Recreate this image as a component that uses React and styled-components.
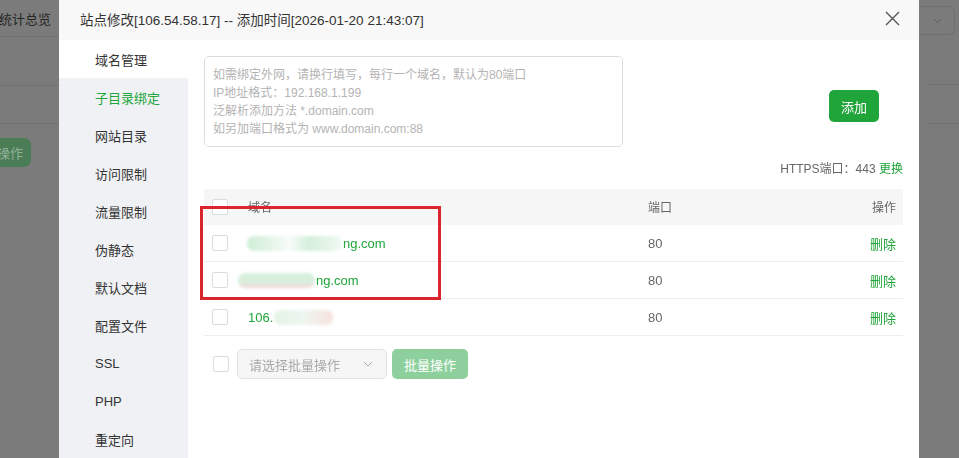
import React from 'react'
import styled, { createGlobalStyle } from 'styled-components'

const Global = createGlobalStyle`
  html, body { margin: 0; padding: 0; }
  body {
    font-family: "Liberation Sans", "Noto Sans CJK SC", sans-serif;
    color: #333;
  }
  * { box-sizing: border-box; }
`

const GREEN = '#20a53a'

const Screen = styled.div`
  position: relative;
  width: 959px;
  height: 458px;
  overflow: hidden;
  background: #7b7b7b;
  display: flex;
  justify-content: space-between;
`

/* page behind the dialog (seen through the mask) */
const BgLeft = styled.div`
  width: 59px;
  overflow: hidden;
  display: flex;
  flex-direction: column;
  align-items: flex-end;
`

const BgRow = styled.div`
  width: 100%;
  height: ${p => p.h}px;
  border-bottom: 1px solid #717171;
  display: flex;
  align-items: center;
  justify-content: flex-end;
  padding-right: 8px;
  font-size: 13px;
  color: #262626;
  white-space: nowrap;
`

const BgButton = styled.div`
  margin-top: 14px;
  margin-right: 28px;
  height: 29px;
  padding: 0 8px 0 20px;
  border-radius: 0 7px 7px 0;
  background: #4a7d56;
  color: #93b19a;
  font-size: 13px;
  display: flex;
  align-items: center;
  white-space: nowrap;
`

const BgRight = styled.div`
  width: 40px;
  display: flex;
  flex-direction: column;
  align-items: flex-end;
`

const BgSelect = styled.div`
  margin-top: 6px;
  margin-right: 4px;
  width: 35px;
  height: 29px;
  border: 1px solid #6f6f6f;
  border-left: none;
  border-radius: 0 6px 6px 0;
  display: flex;
  align-items: center;
  justify-content: center;
`

const BgLine = styled.div`
  width: 31px;
  margin-top: ${p => p.mt}px;
  border-bottom: 1px solid #717171;
`

/* dialog */
const Modal = styled.div`
  position: absolute;
  left: 59px;
  top: 0;
  width: 860px;
  height: 480px;
  background: #fff;
  display: flex;
  flex-direction: column;
`

const Header = styled.div`
  height: 40px;
  flex: none;
  background: #f8f8f8;
  display: flex;
  align-items: center;
  justify-content: space-between;
  padding: 0 18px 0 21px;
`

const Title = styled.div`
  font-size: 13.5px;
  color: #333;
  padding-bottom: 3px;
`

const CloseBtn = styled.div`
  width: 18px;
  height: 18px;
  display: flex;
  align-items: center;
  justify-content: center;
  margin-bottom: 3px;
`

const Body = styled.div`
  flex: 1;
  display: flex;
`

const Side = styled.div`
  width: 129px;
  background: #f0f1f4;
  display: flex;
  flex-direction: column;
`

const SideItem = styled.div`
  height: 38px;
  flex: none;
  display: flex;
  align-items: center;
  padding-left: 36px;
  font-size: 13px;
  color: ${p => (p.active ? GREEN : '#333')};
  background: ${p => (p.hover ? '#fff' : 'transparent')};
`

const Content = styled.div`
  flex: 1;
  padding: 16px 16px 0 16px;
  display: flex;
  flex-direction: column;
`

const AddRow = styled.div`
  display: flex;
  justify-content: space-between;
`

const DomainInput = styled.textarea`
  width: 419px;
  height: 91px;
  border: 1px solid #dcdcdc;
  border-radius: 5px;
  padding: 9px 8px;
  font-family: inherit;
  font-size: 12px;
  line-height: 18px;
  resize: none;
  outline: none;
  &::placeholder { color: #b4b4b4; }
`

const GreenButton = styled.button`
  height: ${p => p.h || 30}px;
  padding: 0 ${p => p.px || 12}px;
  border: none;
  border-radius: 5px;
  background: ${p => (p.disabled ? '#8ed09d' : GREEN)};
  color: #fff;
  font-family: inherit;
  font-size: 13px;
  cursor: pointer;
`

const AddWrap = styled.div`
  margin-top: 34px;
  margin-right: 24px;
`

const PortLine = styled.div`
  margin-top: 14px;
  text-align: right;
  font-size: 12px;
  color: #666;
  line-height: 16px;
`

const Link = styled.span`
  color: ${GREEN};
`

const Table = styled.div`
  margin-top: 12px;
  display: flex;
  flex-direction: column;
`

const Row = styled.div`
  display: grid;
  grid-template-columns: 36px 400px 160px 1fr;
  height: ${p => (p.head ? 36 : 37)}px;
  align-items: center;
  background: ${p => (p.head ? '#f6f6f6' : '#fff')};
  border-bottom: 1px solid ${p => (p.head ? '#f6f6f6' : '#ececec')};
  font-size: ${p => (p.head ? 12 : 13)}px;
  color: #666;
`

const Cell = styled.div`
  padding: 0 ${p => (p.right ? 7 : 8)}px;
  text-align: ${p => (p.right ? 'right' : 'left')};
  display: flex;
  align-items: center;
  justify-content: ${p => (p.right ? 'flex-end' : 'flex-start')};
  white-space: nowrap;
`

const Check = styled.span`
  width: 16px;
  height: 16px;
  border: 1px solid #dcdcdc;
  border-radius: 2px;
  background: #fff;
  display: inline-block;
`

const Domain = styled.span`
  color: ${GREEN};
  display: flex;
  align-items: center;
`

const Blur = styled.span`
  display: inline-block;
  width: ${p => p.w}px;
  height: 15px;
  margin-left: ${p => p.ml || 0}px;
  border-radius: 7px;
  background: ${p => p.bg};
  filter: blur(1.5px);
`

const DomainTail = styled.span`
  margin-left: 1px;
`

const DelLink = styled.span`
  color: ${GREEN};
`

const Footer = styled.div`
  margin-top: 13px;
  display: flex;
  align-items: center;
  gap: 5px;
  padding-left: 9px;
`

const BatchSelect = styled.div`
  margin-left: 3px;
  width: 150px;
  height: 30px;
  border: 1px solid #e4e4e4;
  border-radius: 5px;
  background: #f6f6f6;
  display: flex;
  align-items: center;
  justify-content: space-between;
  padding: 0 13px 0 11px;
  font-size: 13px;
  color: #aaa;
`

const Highlight = styled.div`
  position: absolute;
  left: 200px;
  top: 206px;
  width: 241px;
  height: 94px;
  border: 3px solid #d9262e;
  pointer-events: none;
`

const Chevron = ({ color = '#aaa', size = 10 }) => (
  <svg width={size} height={size * 0.6} viewBox="0 0 10 6">
    <path d="M1 1 L5 5 L9 1" fill="none" stroke={color} strokeWidth="1" />
  </svg>
)

const menu = ['域名管理', '子目录绑定', '网站目录', '访问限制', '流量限制', '伪静态', '默认文档', '配置文件', 'SSL', 'PHP', '重定向']

const greenBlur = 'linear-gradient(90deg, #cfeed7 0%, #e4f5e8 25%, #f8fcf9 45%, #d4efdb 65%, #f0f9f2 100%)'
const pinkBlur = 'linear-gradient(180deg, #d6efdc 0%, #d9efde 60%, #f6d6d9 100%)'
const ipBlur = 'linear-gradient(90deg, #e3f3e6 0%, #eef6ef 50%, #f7e1df 100%)'

const rows = [
  { pre: null, blur: { w: 95, ml: -1, bg: greenBlur }, post: 'ng.com' },
  { pre: null, blur: { w: 77, ml: -10, bg: pinkBlur }, post: 'ng.com' },
  { pre: '106.', blur: { w: 59, ml: 1, bg: ipBlur }, post: '' },
]

export default function App() {
  return (
    <>
      <Global />
      <Screen>
        <BgLeft>
          <BgRow h={37}>网站统计总览</BgRow>
          <BgRow h={49} />
          <BgRow h={38} />
          <BgButton>批量操作</BgButton>
        </BgLeft>
        <BgRight>
          <BgSelect>
            <Chevron color="#5a5a5a" size={9} />
          </BgSelect>
          <BgLine mt={49} />
          <BgLine mt={38} />
        </BgRight>

        <Modal>
          <Header>
            <Title>站点修改[106.54.58.17] -- 添加时间[2026-01-20 21:43:07]</Title>
            <CloseBtn>
              <svg width="15" height="15" viewBox="0 0 15 15">
                <path d="M1 1 L14 14 M14 1 L1 14" stroke="#555" strokeWidth="1.4" fill="none" />
              </svg>
            </CloseBtn>
          </Header>
          <Body>
            <Side>
              {menu.map((m, i) => (
                <SideItem key={m} hover={i === 0} active={i === 1}>{m}</SideItem>
              ))}
            </Side>
            <Content>
              <AddRow>
                <DomainInput
                  placeholder={'如需绑定外网，请换行填写，每行一个域名，默认为80端口\nIP地址格式：192.168.1.199\n泛解析添加方法 *.domain.com\n如另加端口格式为 www.domain.com:88'}
                />
                <AddWrap>
                  <GreenButton h={32} px={12}>添加</GreenButton>
                </AddWrap>
              </AddRow>
              <PortLine>HTTPS端口：443 <Link>更换</Link></PortLine>
              <Table>
                <Row head>
                  <Cell><Check /></Cell>
                  <Cell>域名</Cell>
                  <Cell>端口</Cell>
                  <Cell right>操作</Cell>
                </Row>
                {rows.map((r, i) => (
                  <Row key={i}>
                    <Cell><Check /></Cell>
                    <Cell>
                      <Domain>
                        {r.pre}
                        <Blur w={r.blur.w} ml={r.blur.ml} bg={r.blur.bg} />
                        {r.post && <DomainTail>{r.post}</DomainTail>}
                      </Domain>
                    </Cell>
                    <Cell>80</Cell>
                    <Cell right><DelLink>删除</DelLink></Cell>
                  </Row>
                ))}
              </Table>
              <Footer>
                <Check />
                <BatchSelect>
                  请选择批量操作
                  <Chevron />
                </BatchSelect>
                <GreenButton disabled h={30} px={12}>批量操作</GreenButton>
              </Footer>
            </Content>
          </Body>
        </Modal>

        <Highlight />
      </Screen>
    </>
  )
}
